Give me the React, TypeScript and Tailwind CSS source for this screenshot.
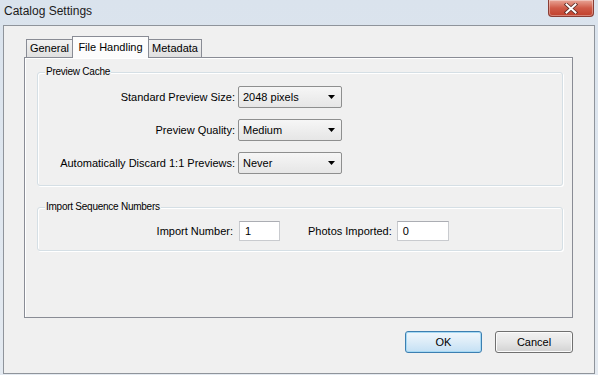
function Select({ value }: { value: string }) {
  return (
    <div className="w-[104px] h-[22px] border border-[#8e8f8f] rounded-[2px] bg-gradient-to-b from-[#f6f6f6] to-[#e6e6e6] flex items-center justify-between pl-[4px] pr-[6px]">
      <span className="text-[11px] text-black">{value}</span>
      <svg width="7" height="4" viewBox="0 0 7 4">
        <path d="M0 0 H7 L3.5 4 Z" fill="#000" />
      </svg>
    </div>
  )
}

function Field({ value, width }: { value: string; width: string }) {
  return (
    <div className={`${width} h-[20px] bg-white border border-[#c9cbcf] border-t-[#abadb3] flex items-center pl-[5px] text-[11px] text-black`}>
      {value}
    </div>
  )
}

function Group({ title, className, children }: { title: string; className: string; children: React.ReactNode }) {
  return (
    <div className={`relative border border-[#d5dfe5] rounded-[3px] shadow-[inset_1px_1px_0_#fff,1px_1px_0_#fff] ${className}`}>
      <span className="absolute left-[7px] -top-[7px] px-[1px] bg-[#f0f0f0] text-[10px] leading-[12px] tracking-[-0.25px] text-black">
        {title}
      </span>
      {children}
    </div>
  )
}

function Row({ label, value }: { label: string; value: string }) {
  return (
    <div className="flex items-center">
      <span className="w-[200px] text-right text-[11px] text-black pr-[3px]">{label}</span>
      <Select value={value} />
    </div>
  )
}

export default function App() {
  return (
    <div className="w-[598px] h-[375px] overflow-hidden flex flex-col bg-gradient-to-b from-[#dae3ed] to-[#e4eaf1] font-['Liberation_Sans',Arial,sans-serif]">
      {/* Title bar */}
      <div className="h-[25px] flex items-start justify-between pl-[4px] pr-[4px]">
        <span className="text-[12px] leading-[22px] text-[#1a1a1a]">Catalog Settings</span>
        <div className="w-[46px] h-[17px] rounded-b-[4px] border border-t-0 border-[#8a3d34] bg-gradient-to-b from-[#e8a597] via-[#cf5b48] to-[#c0402c] shadow-[inset_0_0_0_1px_rgba(255,255,255,0.35)] flex items-center justify-center">
          <svg width="14" height="11" viewBox="0 0 14 11">
            <path d="M2.5 1.5 L11.5 9.5 M11.5 1.5 L2.5 9.5" stroke="#5a2a24" strokeWidth="3.6" strokeLinecap="square" />
            <path d="M2.5 1.5 L11.5 9.5 M11.5 1.5 L2.5 9.5" stroke="#fff" strokeWidth="2" strokeLinecap="square" />
          </svg>
        </div>
      </div>

      {/* Client area */}
      <div className="mx-[3px] mb-0 flex-1 bg-[#f0f0f0] border border-[#8f949b] flex flex-col pt-[10px] pl-[20px] pr-[21px]">
        {/* Tabs */}
        <div className="flex items-end h-[21px] pl-[2px] relative z-10">
          <div className="w-[47px] h-[18px] border border-b-0 border-[#898c95] bg-gradient-to-b from-[#f2f2f2] to-[#e0e0e0] flex items-center justify-center text-[11px] text-black">
            General
          </div>
          <div className="w-[77px] h-[22px] -mb-px -ml-px border border-b-0 border-[#898c95] bg-[#fcfcfc] flex items-center justify-center text-[11px] text-black">
            File Handling
          </div>
          <div className="w-[54px] h-[18px] -ml-px border border-b-0 border-[#898c95] bg-gradient-to-b from-[#f2f2f2] to-[#e0e0e0] flex items-center justify-center text-[11px] text-black">
            Metadata
          </div>
        </div>

        {/* Panel */}
        <div className="w-[549px] h-[261px] border border-[#898c95] bg-[#f0f0f0] shadow-[inset_1px_1px_0_#fff] pt-[14px] pl-[12px] flex flex-col gap-[21px]">
          <Group title="Preview Cache" className="w-[526px] h-[114px] pt-[13px] flex flex-col gap-[11px]">
            <Row label="Standard Preview Size:" value="2048 pixels" />
            <Row label="Preview Quality:" value="Medium" />
            <Row label="Automatically Discard 1:1 Previews:" value="Never" />
          </Group>

          <Group title="Import Sequence Numbers" className="w-[526px] h-[44px] pt-[13px] flex items-start">
            <span className="w-[196px] text-right text-[11px] leading-[20px] text-black pr-[1px]">Import Number:</span>
            <div className="ml-[5px]">
              <Field value="1" width="w-[41px]" />
            </div>
            <span className="ml-[28px] text-[11px] leading-[20px] text-black">Photos Imported:</span>
            <div className="ml-[5px]">
              <Field value="0" width="w-[52px]" />
            </div>
          </Group>
        </div>

        {/* Buttons */}
        <div className="flex justify-end gap-[13px] mt-[13px]">
          <button className="w-[77px] h-[22px] rounded-[3px] border border-[#3c7fb1] bg-gradient-to-b from-[#f0f7fc] via-[#dcecf8] to-[#c4e0f4] shadow-[inset_0_0_0_1px_#a6d9f4] text-[11px] text-black">
            OK
          </button>
          <button className="w-[78px] h-[22px] rounded-[3px] border border-[#707070] bg-gradient-to-b from-[#f2f2f2] via-[#e6e6e6] to-[#d2d2d2] shadow-[inset_0_0_0_1px_#fbfbfb] text-[11px] text-black">
            Cancel
          </button>
        </div>
      </div>
      <div className="h-[1px]" />
    </div>
  )
}
